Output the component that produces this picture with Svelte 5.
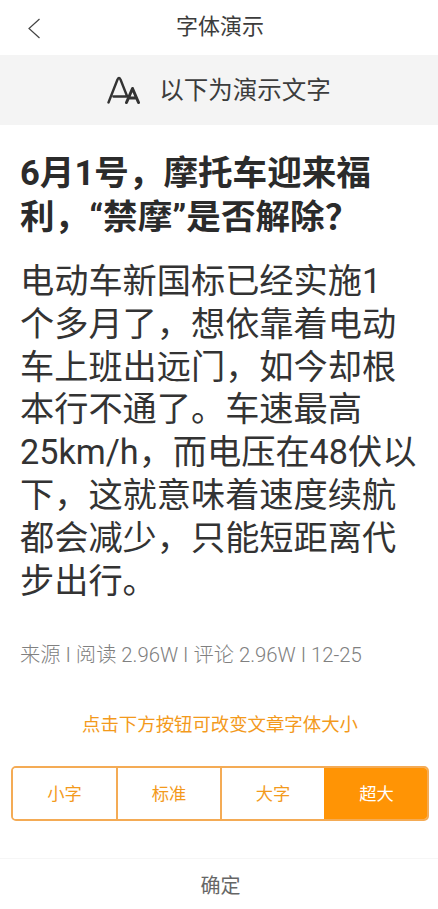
<script>
  const sizes = ['小字', '标准', '大字', '超大'];
  let current = $state('超大');
</script>

<div class="page">
  <header class="nav">
    <svg class="back" width="14" height="22" viewBox="0 0 14 22">
      <path d="M12.5 1 L2 10.5 L12.5 20" fill="none" stroke="#444" stroke-width="1.2" />
    </svg>
    <span class="nav-title">字体演示</span>
  </header>

  <div class="hint-bar">
    <svg class="aa" width="33" height="28" viewBox="0 0 33 28">
      <path d="M1.5 26.5 L10.5 3.5 Q12 0.5 13.5 3.5 L20 20 M6.5 20.5 H20" fill="none" stroke="#333" stroke-width="2.4" stroke-linejoin="round" stroke-linecap="round" />
      <path d="M19.5 26.5 L25.5 12.5 L31.5 26.5 M22.5 22 H28.5" fill="none" stroke="#333" stroke-width="3" stroke-linejoin="round" stroke-linecap="round" />
    </svg>
    <span>以下为演示文字</span>
  </div>

  <article class="article">
    <h1>6月1号，摩托车迎来福<br />利，“禁摩”是否解除？</h1>
    <p class="body">
      电动车新国标已经实施1<br />个多月了，想依靠着电动<br />车上班出远门，如今却根<br />本行不通了。车速最高<br />25km/h，而电压在48伏以<br />下，这就意味着速度续航<br />都会减少，只能短距离代<br />步出行。
    </p>
    <p class="meta">来源 I 阅读 2.96W I 评论 2.96W I 12-25</p>
  </article>

  <p class="tip">点击下方按钮可改变文章字体大小</p>

  <div class="size-group">
    {#each sizes as size}
      <button class="size-btn" class:active={current === size} onclick={() => (current = size)}>{size}</button>
    {/each}
  </div>

  <footer class="confirm">确定</footer>
</div>

<style>
  :global(body) {
    margin: 0;
    background: #fff;
  }

  .page {
    width: 438px;
    height: 909px;
    overflow: hidden;
    display: flex;
    flex-direction: column;
    font-family: Roboto, "Noto Sans CJK SC", sans-serif;
    color: #333;
  }

  .nav {
    position: relative;
    height: 55px;
    display: flex;
    align-items: center;
    justify-content: center;
    flex-shrink: 0;
  }

  .back {
    position: absolute;
    left: 27px;
    top: 18px;
  }

  .nav-title {
    font-size: 22px;
    line-height: 26px;
    margin: -1px 0 0 2px;
    color: #3c3c3c;
  }

  .hint-bar {
    height: 70px;
    flex-shrink: 0;
    background: #f4f4f4;
    display: flex;
    align-items: center;
    justify-content: center;
    gap: 19px;
    font-size: 24.5px;
    line-height: 30px;
    color: #3c3c3c;
  }

  .hint-bar span {
    margin-top: 2px;
  }

  .article {
    padding: 26px 0 0 20px;
    white-space: nowrap;
  }

  h1 {
    margin: 0;
    font-size: 34.6px;
    line-height: 44px;
    font-weight: 700;
    color: #2b2b2b;
  }

  .body {
    margin: 21px 0 0;
    font-size: 34.2px;
    line-height: 42.8px;
    color: #333;
  }

  .meta {
    margin: 39px 0 0;
    font-size: 20.3px;
    line-height: 28px;
    font-weight: 300;
    color: #808080;
  }

  .tip {
    margin: 43px 0 0;
    padding-left: 2px;
    text-align: center;
    font-size: 18.4px;
    line-height: 26px;
    color: #f39a1c;
  }

  .size-group {
    box-sizing: border-box;
    margin: 28px 9px 0 11px;
    height: 55px;
    display: grid;
    grid-template-columns: 103px 104px 104px 1fr;
    border: 2px solid #f4ab55;
    border-radius: 5px;
    overflow: hidden;
    flex-shrink: 0;
  }

  .size-btn {
    border: 0;
    border-left: 2px solid #f4ab55;
    background: #fff;
    color: #f39a1c;
    font: inherit;
    font-size: 17.3px;
    padding: 0 0 3px;
  }

  .size-btn:first-child {
    border-left: 0;
  }

  .size-btn.active {
    background: #ff9405;
    color: #fff;
    border-left-color: #ff9405;
  }

  .confirm {
    margin-top: 37px;
    border-top: 1px solid #f6f6f6;
    height: 58px;
    display: flex;
    align-items: center;
    justify-content: center;
    font-size: 20px;
    padding-left: 3px;
    color: #666;
  }
</style>
